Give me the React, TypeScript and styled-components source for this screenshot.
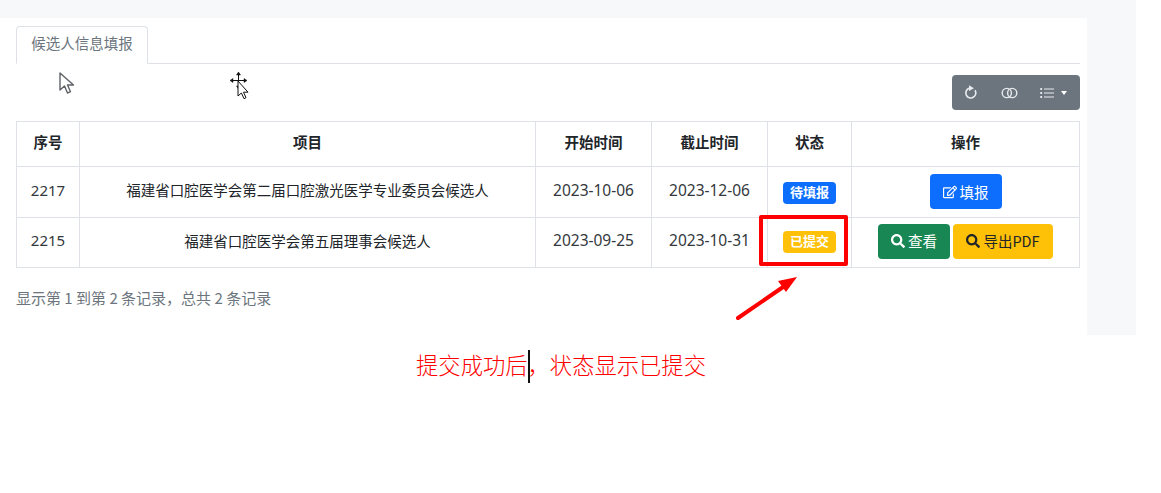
import React from "react";
import styled, { createGlobalStyle } from "styled-components";
import { FaRegEdit, FaSearch } from "react-icons/fa";

const Global = createGlobalStyle`
  html, body { margin: 0; padding: 0; background: #fff; }
  body { font-family: "Noto Sans CJK SC", "Liberation Sans", sans-serif; color: #212529; font-size: 14.5px; }
`;
const Page = styled.div`width: 1161px; height: 493px; overflow: hidden; position: relative;`;
const Shell = styled.div`width: 1136px; height: 335px; background: #f7f8fa; padding-top: 18px; box-sizing: border-box;`;
const Card = styled.div`width: 1087px; height: 317px; background: #fff; padding: 8px 7px 0 16px; box-sizing: border-box;`;
const TabBar = styled.div`display: flex; border-bottom: 1px solid #dee2e6; height: 38px; box-sizing: border-box;`;
const Tab = styled.div`
  width: 132px; height: 38px; box-sizing: border-box; border: 1px solid #dee2e6; border-bottom-color: #fff;
  border-radius: 4px 4px 0 0; background: #fff; color: #6c757d; font-size: 14.5px; line-height: 32px; text-align: center;
`;
const ToolRow = styled.div`display: flex; justify-content: flex-end; margin: 11px 0 11px;`;
const ToolGroup = styled.div`
  width: 128px; height: 35px; background: #6c757d; border-radius: 4px; display: flex; align-items: center; color: #fff;
  padding-left: 12px; box-sizing: border-box;
`;
const ToolIcon = styled.span<{ $w: number }>`width: ${p => p.$w}px; display: flex; align-items: center;`;
const Caret = styled.span`
  width: 0; height: 0; margin-left: 7px; border-top: 4px solid #fff; border-left: 3.5px solid transparent; border-right: 3.5px solid transparent;
`;
const Table = styled.table`
  width: 1063px; table-layout: fixed; border-collapse: collapse; font-size: 14.5px;
  td, th { border: 1px solid #dee2e6; text-align: center; vertical-align: middle; padding: 0 0 5px; }
`;
const HeadRow = styled.tr`height: 45px; th { font-weight: 700; }`;
const BodyRow = styled.tr<{ $h: number }>`height: ${p => p.$h}px;`;
const NumCell = styled.td<{ $size: number }>`font-family: "Noto Sans", "Liberation Sans", sans-serif; font-size: ${p => p.$size}px; color: #33383d;`;
const ControlCell = styled.td<{ $pb: number }>`&& { padding: 0 0 ${p => p.$pb}px; }`;
const Badge = styled.span<{ $bg: string }>`
  display: inline-block; width: 53px; height: 22px; line-height: 20px; background: ${p => p.$bg}; color: #fff;
  border-radius: 4px; font-size: 13px; font-weight: 700; text-align: center; vertical-align: middle;
`;
const Btn = styled.span<{ $bg: string; $fg: string; $w: number }>`
  display: inline-flex; align-items: center; justify-content: center; gap: 3px; width: ${p => p.$w}px; height: 35px; line-height: 32px;
  background: ${p => p.$bg}; color: ${p => p.$fg}; border-radius: 4px; font-size: 14.5px; vertical-align: middle; box-sizing: border-box;
`;
const BtnRow = styled.div`display: flex; justify-content: center; gap: 3px;`;
const Footer = styled.div`margin-top: 20px; color: #6c757d; font-size: 15px; line-height: 20px;`;
const Caption = styled.div`
  color: #f00; font-size: 22.3px; line-height: 30px; font-weight: 300; width: 1122px; text-align: center; margin-top: 14px; white-space: pre;
`;
const TextCaret = styled.span`
  position: absolute; left: 528px; top: 350px; width: 2px; height: 33px; background: #111;
`;
const Overlay = styled.svg`position: absolute; left: 0; top: 0; pointer-events: none;`;
const RedBox = styled.div`
  position: absolute; left: 759px; top: 215px; width: 89px; height: 51px; box-sizing: border-box; border: 4px solid #f00; border-radius: 2px;
`;

export default function App() {
  return (
    <Page>
      <Global />
      <Shell>
        <Card>
          <TabBar><Tab>候选人信息填报</Tab></TabBar>
          <ToolRow>
            <ToolGroup>
              <ToolIcon $w={37}>
                <svg width="14" height="15" viewBox="0 0 14 15" fill="none" stroke="#e9ecef" strokeWidth="1.6">
                  <path d="M11 5.2A5 5 0 1 1 5 3.3" />
                  <path d="M5 .2L10 3.2 5 6z" fill="#e9ecef" stroke="none" />
                </svg>
              </ToolIcon>
              <ToolIcon $w={39}>
                <svg width="17" height="12" viewBox="0 0 17 12" fill="none" stroke="#e9ecef" strokeWidth="1.4">
                  <circle cx="5.8" cy="6" r="4.6" />
                  <circle cx="11.2" cy="6" r="4.6" />
                </svg>
              </ToolIcon>
              <ToolIcon $w={28}>
                <svg width="14" height="12" viewBox="0 0 14 12" fill="none" stroke="#e9ecef" strokeWidth="1.2">
                  <path d="M4 2h10M4 6h10M4 10h10" />
                  <path d="M.3 2h1.8M.3 6h1.8M.3 10h1.8" strokeWidth="1.8" />
                </svg>
                <Caret />
              </ToolIcon>
            </ToolGroup>
          </ToolRow>
          <Table>
            <colgroup>
              <col width="63" /><col width="456" /><col width="116" /><col width="116" /><col width="84" /><col width="228" />
            </colgroup>
            <thead>
              <HeadRow><th>序号</th><th>项目</th><th>开始时间</th><th>截止时间</th><th>状态</th><th>操作</th></HeadRow>
            </thead>
            <tbody>
              <BodyRow $h={51}>
                <NumCell $size={15}>2217</NumCell>
                <td>福建省口腔医学会第二届口腔激光医学专业委员会候选人</td>
                <NumCell $size={15.5}>2023-10-06</NumCell>
                <NumCell $size={15.5}>2023-12-06</NumCell>
                <ControlCell $pb={1}><Badge $bg="#0d6efd">待填报</Badge></ControlCell>
                <ControlCell $pb={1}><BtnRow><Btn $bg="#0d6efd" $fg="#fff" $w={72}><FaRegEdit size={14} /> 填报</Btn></BtnRow></ControlCell>
              </BodyRow>
              <BodyRow $h={50}>
                <NumCell $size={15}>2215</NumCell>
                <td>福建省口腔医学会第五届理事会候选人</td>
                <NumCell $size={15.5}>2023-09-25</NumCell>
                <NumCell $size={15.5}>2023-10-31</NumCell>
                <ControlCell $pb={3}><Badge $bg="#ffc107">已提交</Badge></ControlCell>
                <ControlCell $pb={3}>
                  <BtnRow>
                    <Btn $bg="#198754" $fg="#fff" $w={72}><FaSearch size={14} />查看</Btn>
                    <Btn $bg="#ffc107" $fg="#212529" $w={100}><FaSearch size={14} />导出PDF</Btn>
                  </BtnRow>
                </ControlCell>
              </BodyRow>
            </tbody>
          </Table>
          <Footer>显示第 1 到第 2 条记录，总共 2 条记录</Footer>
        </Card>
      </Shell>
      <Caption>提交成功后，状态显示已提交</Caption>
      <TextCaret />
      <RedBox />
      <Overlay width="1161" height="493" viewBox="0 0 1161 493">
        <path d="M60 73v17l4.5-4 3 7 3-1.3-3-6.7h6z" fill="#fff" stroke="#5f6368" strokeWidth="1.4" strokeLinejoin="round" />
        <g fill="#111" stroke="#111">
          <path d="M238.5 74v14M231 80.5h15" strokeWidth="1" />
          <path d="M238.5 72l-2 3h4zM238.5 89l-2-3h4zM230 80.5l3-2v4zM247 80.5l-3-2v4z" strokeWidth=".5" />
        </g>
        <path d="M238 81v15l3.4-3 2.6 5.7 2-1-2.5-5.5h4.5z" fill="#fff" stroke="#111" strokeWidth="1" />
        <path d="M738 318L786 285" stroke="#f00" strokeWidth="4" strokeLinecap="round" fill="none" />
        <path d="M797 277L778 281l8 11z" fill="#f00" />
      </Overlay>
    </Page>
  );
}
